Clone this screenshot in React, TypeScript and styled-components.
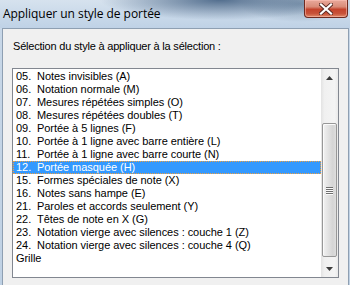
import React from "react";
import styled, { createGlobalStyle } from "styled-components";

const Global = createGlobalStyle`
  html, body { margin: 0; padding: 0; width: 350px; height: 285px; overflow: hidden; }
  body { font-family: "Liberation Sans", Arial, sans-serif; }
`;

const Window = styled.div`
  width: 350px;
  height: 285px;
  display: flex;
  flex-direction: column;
  overflow: hidden;
  background: linear-gradient(180deg, #c9d8e8 0%, #bfd1e4 100%);
`;

const TitleBar = styled.div`
  height: 28px;
  flex: none;
  display: flex;
  align-items: flex-start;
  justify-content: space-between;
  background:
    radial-gradient(ellipse 120px 20px at 220px 0px, rgba(60, 90, 125, 0.85), rgba(60, 90, 125, 0) 100%),
    radial-gradient(ellipse 60px 18px at 300px 4px, rgba(80, 110, 140, 0.55), rgba(80, 110, 140, 0) 100%),
    linear-gradient(180deg, #d6e2ee 0%, #c8d8e9 60%, #bfd2e6 100%);
`;

const Title = styled.div`
  padding: 7px 0 0 3px;
  font-family: "Open Sans", "Liberation Sans", sans-serif;
  font-size: 12px;
  line-height: 14px;
  letter-spacing: -0.05px;
  color: #000;
`;

const CloseButton = styled.div`
  width: 44px;
  height: 18px;
  margin-right: 2px;
  box-sizing: border-box;
  border: 1px solid #6e2a20;
  border-top: none;
  border-radius: 0 0 4px 4px;
  display: flex;
  align-items: center;
  justify-content: center;
  background: linear-gradient(180deg, #e9a99b 0%, #d98b78 40%, #c4432c 55%, #c8533a 80%, #e08a68 100%);
  box-shadow: inset 0 0 0 1px rgba(255, 200, 190, 0.5);
`;

const Frame = styled.div`
  flex: 1;
  display: flex;
  padding: 0 2px;
`;

const Panel = styled.div`
  flex: 1;
  background: #f0f0f0;
  border: 1px solid #8e9fb2;
  border-bottom: none;
  padding: 11px 9px 0 9px;
  display: flex;
  flex-direction: column;
`;

const Label = styled.div`
  font-family: "Liberation Sans", Arial, sans-serif;
  font-size: 11px;
  line-height: 13px;
  letter-spacing: -0.2px;
  color: #000;
  padding-left: 1px;
  margin-bottom: 15px;
`;

const ListBox = styled.div`
  width: 327px;
  height: 210px;
  box-sizing: border-box;
  border: 1px solid #828790;
  background: #fff;
  display: flex;
`;

const Items = styled.div`
  flex: 1;
  padding-top: 1px;
  display: flex;
  flex-direction: column;
`;

const Row = styled.div<{ $selected?: boolean }>`
  height: 13px;
  display: flex;
  align-items: center;
  padding-left: 3px;
  font-family: "Liberation Sans", Arial, sans-serif;
  font-size: 11px;
  line-height: 13px;
  letter-spacing: -0.05px;
  white-space: nowrap;
  color: ${(p) => (p.$selected ? "#fff" : "#000")};
  background: ${(p) => (p.$selected ? "#3399ff" : "transparent")};
  outline: ${(p) => (p.$selected ? "1px dotted #f0a040" : "none")};
  outline-offset: -1px;
`;

const Num = styled.span`
  display: inline-block;
  width: 21px;
`;

const Scrollbar = styled.div`
  width: 17px;
  flex: none;
  display: flex;
  flex-direction: column;
  background: linear-gradient(90deg, #e3e3e3 0%, #f0f0f0 20%, #f4f4f4 80%, #eaeaea 100%);
`;

const ArrowButton = styled.div`
  height: 17px;
  flex: none;
  display: flex;
  align-items: center;
  justify-content: center;
`;

const Track = styled.div`
  flex: 1;
  display: flex;
  flex-direction: column;
`;

const TrackGap = styled.div<{ $h: number }>`
  height: ${(p) => p.$h}px;
  flex: none;
`;

const Thumb = styled.div`
  height: 134px;
  margin: 0 1px;
  box-sizing: border-box;
  border: 1px solid #979797;
  border-radius: 2px;
  background: linear-gradient(90deg, #f2f2f2 0%, #e6e6e6 30%, #d5d5d5 75%, #dedede 100%);
  box-shadow: inset 1px 1px 0 #fbfbfb;
  display: flex;
  flex-direction: column;
  align-items: center;
  justify-content: center;
  gap: 1px;
`;

const GripLine = styled.div`
  width: 7px;
  height: 1px;
  background: #6e6e6e;
  box-shadow: 0 1px 0 #fafafa;
`;

const items: [string, string][] = [
  ["05.", "Notes invisibles (A)"],
  ["06.", "Notation normale (M)"],
  ["07.", "Mesures répétées simples (O)"],
  ["08.", "Mesures répétées doubles (T)"],
  ["09.", "Portée à 5 lignes (F)"],
  ["10.", "Portée à 1 ligne avec barre entière (L)"],
  ["11.", "Portée à 1 ligne avec barre courte (N)"],
  ["12.", "Portée masquée (H)"],
  ["15.", "Formes spéciales de note (X)"],
  ["16.", "Notes sans hampe (E)"],
  ["21.", "Paroles et accords seulement (Y)"],
  ["22.", "Têtes de note en X (G)"],
  ["23.", "Notation vierge avec silences : couche 1 (Z)"],
  ["24.", "Notation vierge avec silences : couche 4 (Q)"],
];

export default function App() {
  return (
    <>
      <Global />
      <Window>
        <TitleBar>
          <Title>Appliquer un style de portée</Title>
          <CloseButton>
            <svg width="14" height="12" viewBox="0 0 14 12">
              <path d="M2 1.5 L12 10.5 M12 1.5 L2 10.5" stroke="#5a2a24" strokeWidth="4" strokeLinecap="square" />
              <path d="M2 1.5 L12 10.5 M12 1.5 L2 10.5" stroke="#ffffff" strokeWidth="2.2" strokeLinecap="square" />
            </svg>
          </CloseButton>
        </TitleBar>
        <Frame>
          <Panel>
            <Label>Sélection du style à appliquer à la sélection :</Label>
            <ListBox>
              <Items>
                {items.map(([n, t]) => (
                  <Row key={n} $selected={n === "12."}>
                    <Num>{n}</Num>
                    {t}
                  </Row>
                ))}
                <Row>Grille</Row>
              </Items>
              <Scrollbar>
                <ArrowButton>
                  <svg width="7" height="4" viewBox="0 0 7 4">
                    <path d="M3.5 0 L7 4 L0 4 Z" fill="#3c3c3c" />
                  </svg>
                </ArrowButton>
                <Track>
                  <TrackGap $h={37} />
                  <Thumb>
                    <GripLine />
                    <GripLine />
                    <GripLine />
                    <GripLine />
                  </Thumb>
                </Track>
                <ArrowButton>
                  <svg width="7" height="4" viewBox="0 0 7 4">
                    <path d="M0 0 L7 0 L3.5 4 Z" fill="#3c3c3c" />
                  </svg>
                </ArrowButton>
              </Scrollbar>
            </ListBox>
          </Panel>
        </Frame>
      </Window>
    </>
  );
}
